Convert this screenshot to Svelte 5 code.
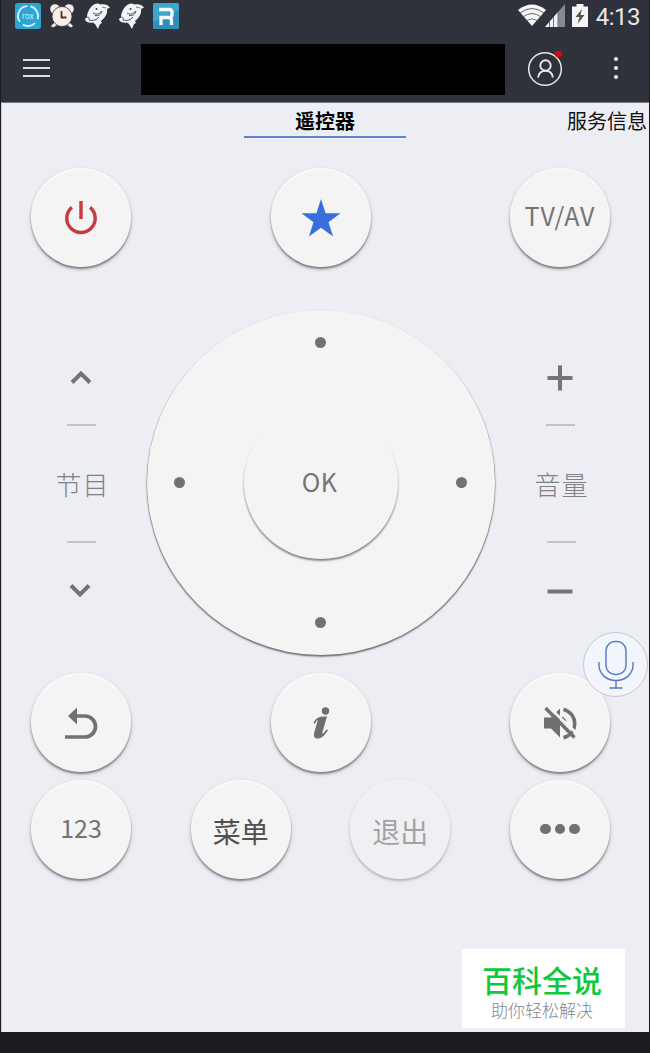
<script>
    let recording = $state(false);
    let pressed = $state('');

    const press = (key) => (pressed = key);

    const notifications = ['rox', 'alarm', 'shark', 'shark', 'r'];
    const numberRow = [
        { key: 'digits', label: '123', kind: 'latin' },
        { key: 'menu', label: '菜单', kind: 'dark' },
        { key: 'exit', label: '退出', kind: 'faded' }
    ];
</script>

{#snippet statusIcon(name)}
    {#if name === 'rox'}
        <svg class="status-icon" width="26" height="26" viewBox="0 0 26 26">
            <rect width="26" height="26" rx="3" fill="#2ea5d5" />
            <circle cx="13" cy="13" r="10" fill="none" stroke="#e6f8ff" stroke-width="1.7" stroke-dasharray="16 5 13 4 21 4" transform="rotate(-75 13 13)" />
            <text x="13" y="15.7" text-anchor="middle" font-size="8" fill="#c9efff" font-family="Inter, sans-serif">rox</text>
        </svg>
    {:else if name === 'alarm'}
        <svg class="status-icon" width="26" height="26" viewBox="0 0 26 26">
            <g fill="#fbeee9">
                <circle cx="6" cy="6" r="4.8" />
                <circle cx="20" cy="6" r="4.8" />
                <path d="M6 19l-4 4 2 1.500 5-3zM20 19l4 4-2 1.500-5-3z" />
            </g>
            <circle cx="13" cy="13.500" r="10" fill="#fbeee9" stroke="#33343d" stroke-width="0.800" />
            <path d="M12.500 8v6.500h5" fill="none" stroke="#41353a" stroke-width="1.800" />
        </svg>
    {:else if name === 'shark'}
        <svg class="status-icon" width="26" height="26" viewBox="0 0 26 26">
            <path d="M11 1c2-1 4-.500 5 .500 4-1 8 0 10 3l-3 1.500c1 4-2 9-6 12l1 2-2 1-2 5-3-5-2-1.500c-3 .500-6 0-7-1.500-2-2 0-3 1-4 0-4 3-11 8-13z" fill="#f3f4f5" />
            <path d="M9 10c3 2 6 1 9-2-1 4-4 5-7 4.500M2 15c2-2 4 0 3 2 4 1 8 0 10-3" fill="none" stroke="#4a4e57" stroke-width="1" />
            <circle cx="12.500" cy="6" r="1" fill="#3d414b" />
            <path d="M18 4l4 1" stroke="#777b83" stroke-width="1" />
        </svg>
    {:else}
        <svg class="status-icon" width="26" height="26" viewBox="0 0 26 26">
            <rect width="26" height="26" rx="1.500" fill="#3fa6cb" />
            <path d="M0 26V19l26-12v19z" fill="#2d90b6" />
            <path d="M6 6.500h10q3 0 3 3v2.500q0 2.500-3 2.500H8v7.500M15 14.500q3.500 0 3.500 3v4.500" fill="none" stroke="#f1fbff" stroke-width="3.300" />
        </svg>
    {/if}
{/snippet}

<div class="phone">
    <header>
        <div class="status-bar">
            <div class="notifications">
                {#each notifications as name}
                    {@render statusIcon(name)}
                {/each}
            </div>
            <div class="system">
                <svg width="28" height="22" viewBox="0 0 28 22">
                    <path d="M0 6Q14-5 28 6L14 22z" fill="#f5f5f6" />
                    <path d="M2 9q12-9 24 0M5 13q9-7 18 0M8.500 17q5.500-4 11 0" fill="none" stroke="#656871" stroke-width="1" />
                </svg>
                <svg class="signal" width="20" height="23" viewBox="0 0 20 23">
                    <path d="M0 23L20 0v23z" fill="#878a91" />
                    <path d="M0 23L13 8v15z" fill="#f1f1f3" />
                    <path d="M4.500 17v6M8.500 13v10M13 8v15" stroke="#6c7078" stroke-width="1" />
                </svg>
                <svg class="battery" width="16" height="23" viewBox="0 0 16 23">
                    <path d="M4.500 0h7v2.500H16V23H0V2.500h4.500z" fill="#f4f4f2" />
                    <path d="M10 5L3.500 13h4L5.500 20l7-9H8.500z" fill="#53534e" />
                </svg>
                <span class="clock">4:13</span>
            </div>
        </div>
        <div class="app-bar">
            <button class="menu" aria-label="menu"><i></i><i></i><i></i></button>
            <div class="device"></div>
            <button class="account" aria-label="account">
                <svg width="36" height="36" viewBox="0 0 36 36" fill="none" stroke="#e7e8ec">
                    <circle cx="18" cy="18" r="16.300" stroke-width="1.500" />
                    <circle cx="18.500" cy="14.500" r="5.200" stroke-width="1.900" />
                    <path d="M11.200 26.500c0-9 14.600-9 14.600 0" stroke-width="1.900" />
                </svg>
                <span class="unread"></span>
            </button>
            <button class="more" aria-label="more"><i></i><i></i><i></i></button>
        </div>
    </header>

    <main>
        <nav>
            <span class="tab active">遥控器</span>
            <span class="tab next">服务信息</span>
        </nav>

        <div class="row top-row">
            <button class="round" aria-label="power" onclick={() => press('power')}>
                <svg width="36" height="36" viewBox="0 0 36 36" fill="none" stroke="#c73a40" stroke-width="3.400">
                    <path d="M8.900 7.400A14.200 14.200 0 1 0 27.100 7.400M18 1v18" />
                </svg>
            </button>
            <button class="round" aria-label="favourite" onclick={() => press('star')}>
                <svg width="40" height="40" viewBox="0 0 40 40">
                    <path d="M20 1l4.600 14.300H39.500L27.500 24.200l4.600 14.300L20 29.800 7.900 38.500l4.600-14.300L.500 15.300h14.900z" fill="#386fdc" />
                </svg>
            </button>
            <button class="round latin tv" onclick={() => press('source')}>TV/AV</button>
        </div>

        <div class="center">
            <div class="rocker">
                <svg width="24" height="24" viewBox="0 0 24 24"><path d="M3 16.500L12 7.500l9 9" /></svg>
                <hr />
                <span>节目</span>
                <hr />
                <svg class="down" width="24" height="24" viewBox="0 0 24 24"><path d="M2 7.500l9 9 9-9" /></svg>
            </div>

            <div class="dpad">
                <i class="up"></i>
                <i class="left"></i>
                <button class="ok latin" onclick={() => press('ok')}>OK</button>
                <i class="right"></i>
                <i class="bottom"></i>
            </div>

            <div class="rocker">
                <svg width="26" height="24" viewBox="0 0 26 24"><path d="M.500 12h25M13-.500v25" /></svg>
                <hr />
                <span>音量</span>
                <hr class="low" />
                <svg class="down" width="26" height="24" viewBox="0 0 26 24"><path d="M.500 13.500h25" /></svg>
            </div>
        </div>

        <div class="row function-row">
            <button class="round" aria-label="back" onclick={() => press('back')}>
                <svg width="36" height="36" viewBox="0 0 36 36">
                    <path d="M10 11h12a10.500 10.500 0 0 1 0 21H2" fill="none" stroke="#727272" stroke-width="3.700" />
                    <path d="M5 11L14 2.500v17z" fill="#727272" />
                </svg>
            </button>
            <button class="round" aria-label="info" onclick={() => press('info')}>
                <svg width="20" height="34" viewBox="0 0 20 34" fill="#6e6e6e">
                    <circle cx="14.500" cy="5" r="3.700" />
                    <path d="M2.500 17C4.500 11.500 9 10 16 10.500L11.500 26c-.700 2.500 1 2 4-2.500l1.500.800C13 31 9 33 6 32.500c-3-.500-3.500-3-2.700-6L6.500 15c.500-2-1-1-2.500 3z" />
                </svg>
            </button>
            <button class="round" aria-label="mute" onclick={() => press('mute')}>
                <svg width="36" height="36" viewBox="0 0 36 36">
                    <path d="M2 12.500h7L18 3.500v29l-9-9H2z" fill="#707070" />
                    <path d="M20 11.500q5 2 4.500 7.500l-4.500-2z" fill="#707070" />
                    <path d="M21.500 4.200c15 5 15 24 0 28.500" fill="none" stroke="#707070" stroke-width="3.600" />
                    <path d="M6 1.500L37 30.500" stroke="#f4f4f4" stroke-width="3" />
                    <path d="M3.500 3L32.500 32.500" stroke="#707070" stroke-width="3.400" />
                </svg>
            </button>
        </div>

        <div class="row number-row">
            {#each numberRow as item (item.key)}
                <button class="round {item.kind}" onclick={() => press(item.key)}>{item.label}</button>
            {/each}
            <button class="round dots" aria-label="others" onclick={() => press('others')}><i></i><i></i><i></i></button>
        </div>

        <button class="mic" class:recording aria-label="voice" onclick={() => (recording = !recording)}>
            <svg width="36" height="50" viewBox="0 0 36 50" fill="none" stroke="#5178c4" stroke-width="1.400">
                <rect x="8" y="1.500" width="20" height="33" rx="9" />
                <path d="M.900 22v2c0 22 34.200 22 34.200 0v-2M18 40.500V48M11.500 48h13" />
            </svg>
        </button>

        <div class="stamp">
            <strong>百科全说</strong>
            <small>助你轻松解决</small>
        </div>
    </main>
</div>

<style>
    :global(body) {
        background: #1c1b20;
    }

    .phone {
        box-sizing: border-box;
        width: 650px;
        height: 1053px;
        padding: 0 1px;
        background: #1c1b20;
        font-family: "Noto Sans CJK SC", "Noto Sans", sans-serif;
        overflow: hidden;
    }

    button {
        margin: 0;
        padding: 0;
        border: 0;
        background: none;
        font-family: inherit;
    }

    svg {
        display: block;
        flex: none;
    }

    header {
        height: 102px;
        background: #2f313b;
    }

    .status-bar {
        display: flex;
        justify-content: space-between;
        height: 32px;
        padding: 0 9px 0 13.5px;
    }

    .notifications {
        display: flex;
        gap: 8.5px;
        padding-top: 3px;
    }

    .system {
        display: flex;
        align-items: flex-start;
        padding-top: 4px;
    }

    .signal {
        margin-left: -1px;
    }

    .battery {
        margin-left: 7px;
    }

    .clock {
        margin: -2px 0 0 8px;
        color: #e8e8ea;
        font: 24px/30px Roboto, sans-serif;
        letter-spacing: -0.5px;
    }

    .app-bar {
        display: flex;
        align-items: center;
        height: 70px;
    }

    .menu {
        display: flex;
        flex-direction: column;
        gap: 6.5px;
        width: 27px;
        margin: 2px 91px 0 22px;
    }

    .menu i {
        height: 1.5px;
        background: #dcdde2;
    }

    .device {
        width: 364px;
        height: 51px;
        margin-top: 5px;
        background: #000;
    }

    .account {
        position: relative;
        margin: 3px 0 0 22px;
    }

    .unread {
        position: absolute;
        top: 0;
        right: 1px;
        width: 7px;
        height: 6px;
        border-radius: 2px;
        background: #d80808;
    }

    .more {
        display: flex;
        flex-direction: column;
        gap: 4.5px;
        margin: 2px 0 0 51px;
    }

    .more i {
        width: 4.2px;
        height: 4.2px;
        border-radius: 50%;
        background: #f4f4f6;
    }

    main {
        position: relative;
        box-sizing: border-box;
        height: 930px;
        padding: 0 39px 0 29px;
        border-top: 1px solid #777880;
        border-left: 1px solid #cfd0d5;
        background: #edeef4;
    }

    nav {
        display: flex;
        height: 65px;
        margin: 0 -39px 0 213px;
    }

    .tab {
        box-sizing: border-box;
        height: 35px;
        font-size: 20px;
        line-height: 36px;
        white-space: nowrap;
        color: #111;
    }

    .active {
        width: 162px;
        border-bottom: 2px solid #5c84cf;
        font-weight: 700;
        color: #000;
        text-align: center;
    }

    .next {
        margin: 0 0 0 auto;
        padding-right: 2px;
    }

    .row {
        display: flex;
        justify-content: space-between;
    }

    .top-row {
        height: 142px;
    }

    .round {
        display: flex;
        align-items: center;
        justify-content: center;
        width: 100px;
        height: 99px;
        border-radius: 50%;
        background: #f4f4f4;
        box-shadow: 0 2px 2px rgba(60, 60, 65, 0.55), 0 2px 5px rgba(60, 60, 65, 0.18), inset 0 2px 2px #fafafa;
    }

    .latin {
        padding-bottom: 4px;
        color: #747474;
        font-size: 25px;
        line-height: 36px;
        box-sizing: border-box;
    }

    .tv {
        padding-bottom: 6px;
        letter-spacing: 1px;
    }

    .center {
        display: flex;
        justify-content: space-between;
        height: 363px;
    }

    .rocker {
        display: flex;
        flex-direction: column;
        align-items: center;
        width: 100px;
        padding-top: 56px;
    }

    .rocker svg {
        fill: none;
        stroke: #737477;
        stroke-width: 4;
        overflow: visible;
    }

    .rocker hr {
        width: 29px;
        height: 2px;
        margin: 34px 0 0;
        border: 0;
        background: #c3c4c8;
    }

    .rocker .low {
        margin-left: 3px;
    }

    .rocker span {
        height: 36px;
        margin: 39px 0 6px 3px;
        color: #808184;
        font-size: 26px;
        font-weight: 300;
        line-height: 37px;
        letter-spacing: 1px;
        white-space: nowrap;
    }

    .rocker .down {
        margin-top: 35px;
    }

    .dpad {
        display: grid;
        grid-template-columns: 66px 1fr 66px;
        grid-template-rows: 65px 1fr 65px;
        place-items: center;
        width: 348px;
        height: 345px;
        border-radius: 50%;
        background: #f4f4f4;
        box-shadow: 0 1px 1px 0.5px rgba(70, 70, 75, 0.55), 0 2px 2px rgba(70, 70, 75, 0.35);
    }

    .dpad i {
        width: 11px;
        height: 11px;
        border-radius: 50%;
        background: #727272;
    }

    .up,
    .bottom {
        grid-column: 2;
    }

    .left {
        grid-area: 2 / 1;
    }

    .right {
        grid-area: 2 / 3;
    }

    .ok {
        grid-area: 2 / 2;
        width: 154px;
        height: 153px;
        padding-right: 2px;
        border-radius: 50%;
        background: #f4f4f4;
        box-shadow: 0 2px 2px rgba(60, 60, 65, 0.6), inset 0 1px 1px #f9f9f9;
        letter-spacing: 0.5px;
    }

    .function-row {
        height: 106.5px;
    }

    .number-row .latin {
        padding-bottom: 5px;
    }

    .dark,
    .faded {
        box-sizing: border-box;
        padding-top: 3px;
        color: #505050;
        font-size: 28px;
        line-height: 36px;
    }

    .faded {
        opacity: 0.48;
    }

    .dots {
        gap: 4px;
    }

    .dots i {
        width: 10.5px;
        height: 10.5px;
        border-radius: 50%;
        background: #707070;
    }

    .mic {
        position: absolute;
        top: 529px;
        right: 1px;
        display: flex;
        align-items: center;
        justify-content: center;
        box-sizing: border-box;
        width: 65px;
        height: 65px;
        border: 1px solid #c4c6cc;
        border-radius: 50%;
        background: #f2f5fb;
    }

    .recording {
        background: #dfe9fb;
    }

    .stamp {
        position: absolute;
        right: 24px;
        bottom: 4px;
        display: flex;
        flex-direction: column;
        align-items: center;
        box-sizing: border-box;
        width: 163px;
        height: 79px;
        padding-top: 10px;
        background: #fff;
    }

    .stamp strong {
        height: 40px;
        margin-right: 3px;
        color: #0fc83c;
        font-size: 30px;
        font-weight: 500;
        line-height: 41px;
    }

    .stamp small {
        margin-right: 3px;
        color: #858585;
        font-size: 17px;
        font-weight: 300;
        line-height: 22px;
    }
</style>
